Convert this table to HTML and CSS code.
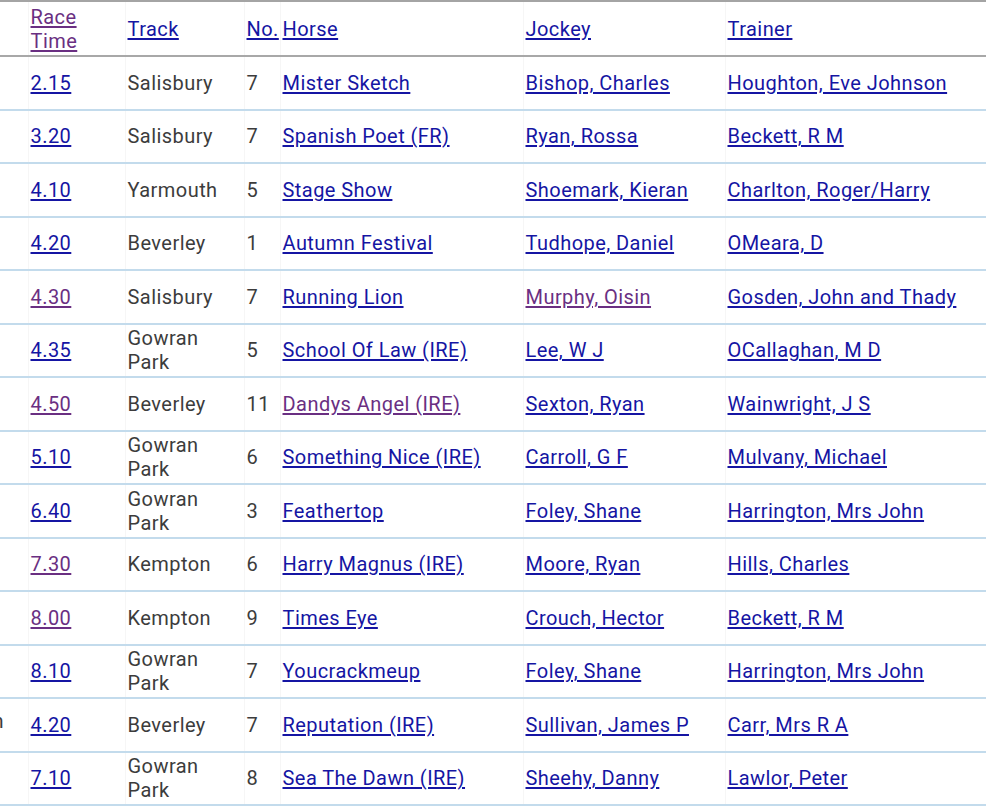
FILE: index.html
```html
<!DOCTYPE html>
<html>
<head>
<meta charset="utf-8">
<link rel="stylesheet" href="styles.css">
</head>
<body>
<table class="races">
  <colgroup>
    <col class="c-prev"><col class="c-time"><col class="c-track"><col class="c-no"><col class="c-horse"><col class="c-jockey"><col class="c-trainer">
  </colgroup>
  <thead>
    <tr>
      <th></th>
      <th><a class="v" href="#">Race Time</a></th>
      <th><a href="#">Track</a></th>
      <th><a href="#">No.</a></th>
      <th><a href="#">Horse</a></th>
      <th><a href="#">Jockey</a></th>
      <th><a href="#">Trainer</a></th>
    </tr>
  </thead>
  <tbody>
    <tr><td></td><td><a href="#">2.15</a></td><td>Salisbury</td><td>7</td><td><a href="#">Mister Sketch</a></td><td><a href="#">Bishop, Charles</a></td><td><a href="#">Houghton, Eve Johnson</a></td></tr>
    <tr><td></td><td><a href="#">3.20</a></td><td>Salisbury</td><td>7</td><td><a href="#">Spanish Poet (FR)</a></td><td><a href="#">Ryan, Rossa</a></td><td><a href="#">Beckett, R M</a></td></tr>
    <tr><td></td><td><a href="#">4.10</a></td><td>Yarmouth</td><td>5</td><td><a href="#">Stage Show</a></td><td><a href="#">Shoemark, Kieran</a></td><td><a href="#">Charlton, Roger/Harry</a></td></tr>
    <tr><td></td><td><a href="#">4.20</a></td><td>Beverley</td><td>1</td><td><a href="#">Autumn Festival</a></td><td><a href="#">Tudhope, Daniel</a></td><td><a href="#">OMeara, D</a></td></tr>
    <tr><td></td><td><a class="v" href="#">4.30</a></td><td>Salisbury</td><td>7</td><td><a href="#">Running Lion</a></td><td><a class="v" href="#">Murphy, Oisin</a></td><td><a href="#">Gosden, John and Thady</a></td></tr>
    <tr><td></td><td><a href="#">4.35</a></td><td>Gowran Park</td><td>5</td><td><a href="#">School Of Law (IRE)</a></td><td><a href="#">Lee, W J</a></td><td><a href="#">OCallaghan, M D</a></td></tr>
    <tr><td></td><td><a class="v" href="#">4.50</a></td><td>Beverley</td><td>11</td><td><a class="v" href="#">Dandys Angel (IRE)</a></td><td><a href="#">Sexton, Ryan</a></td><td><a href="#">Wainwright, J S</a></td></tr>
    <tr><td></td><td><a href="#">5.10</a></td><td>Gowran Park</td><td>6</td><td><a href="#">Something Nice (IRE)</a></td><td><a href="#">Carroll, G F</a></td><td><a href="#">Mulvany, Michael</a></td></tr>
    <tr><td></td><td><a href="#">6.40</a></td><td>Gowran Park</td><td>3</td><td><a href="#">Feathertop</a></td><td><a href="#">Foley, Shane</a></td><td><a href="#">Harrington, Mrs John</a></td></tr>
    <tr><td></td><td><a class="v" href="#">7.30</a></td><td>Kempton</td><td>6</td><td><a href="#">Harry Magnus (IRE)</a></td><td><a href="#">Moore, Ryan</a></td><td><a href="#">Hills, Charles</a></td></tr>
    <tr><td></td><td><a class="v" href="#">8.00</a></td><td>Kempton</td><td>9</td><td><a href="#">Times Eye</a></td><td><a href="#">Crouch, Hector</a></td><td><a href="#">Beckett, R M</a></td></tr>
    <tr><td></td><td><a href="#">8.10</a></td><td>Gowran Park</td><td>7</td><td><a href="#">Youcrackmeup</a></td><td><a href="#">Foley, Shane</a></td><td><a href="#">Harrington, Mrs John</a></td></tr>
    <tr><td><div class="prev">Kempton</div></td><td><a href="#">4.20</a></td><td>Beverley</td><td>7</td><td><a href="#">Reputation (IRE)</a></td><td><a href="#">Sullivan, James P</a></td><td><a href="#">Carr, Mrs R A</a></td></tr>
    <tr><td></td><td><a href="#">7.10</a></td><td>Gowran Park</td><td>8</td><td><a href="#">Sea The Dawn (IRE)</a></td><td><a href="#">Sheehy, Danny</a></td><td><a href="#">Lawlor, Peter</a></td></tr>
  </tbody>
</table>
</body>
</html>
```

FILE: styles.css
```css
html, body {
  margin: 0;
  padding: 0;
  background: #ffffff;
}

body {
  font-family: Roboto, "Noto Sans", sans-serif;
  font-size: 20px;
  letter-spacing: 0.45px;
  line-height: 24px;
  color: #3c3c3c;
}

.races {
  width: 986px;
  table-layout: fixed;
  border-collapse: collapse;
  border-top: 2px solid #a4a4a4;
}

.c-prev { width: 28px; }
.c-time { width: 97px; }
.c-track { width: 119px; }
.c-no { width: 36px; }
.c-horse { width: 243px; }
.c-jockey { width: 202px; }
.c-trainer { width: 261px; }

.races th {
  height: 53px;
  padding: 0 2px;
  text-align: left;
  font-weight: normal;
  vertical-align: middle;
  border-bottom: 2px solid #a8a8a8;
  border-left: 1px solid #f6f6f6;
}

.races td {
  height: 51.5px;
  padding: 0 2px;
  vertical-align: middle;
  border-bottom: 2px solid #c3dbec;
  border-left: 1px solid #f6f6f6;
}

.races th:first-child,
.races td:first-child {
  border-left: none;
  padding: 0;
}

.races a {
  color: #1515a3;
  text-decoration: underline;
  text-underline-offset: 2px;
}

.races a.v {
  color: #6a2f82;
}

.prev {
  width: 4px;
  overflow: hidden;
  white-space: nowrap;
  direction: rtl;
  text-align: right;
  color: #3c3c3c;
  margin-top: -8px;
}
```
